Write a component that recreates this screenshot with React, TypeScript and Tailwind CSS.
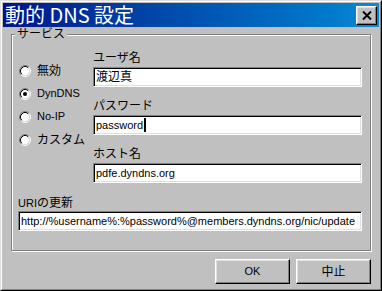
import React from "react";

const font = { fontFamily: '"Liberation Sans", "Noto Sans CJK JP", sans-serif' };

// classic win radio, drawn as 4 arcs + fill
function Radio({ checked }: { checked?: boolean }) {
    return (
        <svg width="12" height="12" viewBox="0 0 12 12" className="shrink-0">
            <circle cx="6" cy="6" r="4.2" fill="#fff" />
            <path d="M2.11 9.89 A5.5 5.5 0 0 1 9.89 2.11" stroke="#808080" fill="none" />
            <path d="M9.89 2.11 A5.5 5.5 0 0 1 2.11 9.89" stroke="#fff" fill="none" />
            <path d="M2.82 9.18 A4.5 4.5 0 0 1 9.18 2.82" stroke="#000" fill="none" />
            <path d="M9.18 2.82 A4.5 4.5 0 0 1 2.82 9.18" stroke="#dfdfdf" fill="none" />
            {checked && <circle cx="6" cy="6" r="2" fill="#000" />}
        </svg>
    );
}

const TextBox = ({ children, className = "" }: { children: React.ReactNode; className?: string }) => (
    <div className={"h-[20px] bg-white border border-t-[#808080] border-l-[#808080] border-r-white border-b-white shadow-[inset_1px_1px_0_#000,inset_-1px_-1px_0_#dfdfdf] flex items-center pl-[2px] text-black whitespace-nowrap overflow-hidden " + className}>
        {children}
    </div>
);

const Button = ({ label, className = "" }: { label: string; className?: string }) => (
    <button className={"w-[75px] h-[25px] bg-[#c0c0c0] border border-t-white border-l-white border-r-black border-b-black shadow-[inset_-1px_-1px_0_#808080,inset_1px_1px_0_#dfdfdf] text-black flex items-center justify-center " + className}>
        {label}
    </button>
);

const Field = ({ label, children }: { label: string; children: React.ReactNode }) => (
    <div className="flex flex-col">
        <div className="h-[14px] leading-[14px] text-[12px] text-black">{label}</div>
        <div className="mt-[2px]">{children}</div>
    </div>
);

export default function App() {
    const options = [
        { label: "無効", size: "text-[12px]" },
        { label: "DynDNS", checked: true, size: "text-[11px]" },
        { label: "No-IP", size: "text-[11px]" },
        { label: "カスタム", size: "text-[12px]" },
    ];

    return (
        <div style={font} className="w-[382px] h-[291px] bg-[#c0c0c0] border border-t-[#dfdfdf] border-l-[#dfdfdf] border-r-black border-b-black">
            <div className="h-full border border-t-white border-l-white border-r-[#808080] border-b-[#808080] p-px flex flex-col">
                {/* title bar */}
                <div className="h-[24px] flex items-center justify-between bg-linear-to-r from-[#00108a] to-[#1088d4] pl-[2px] pr-[2px]">
                    <span className="text-white text-[20px] leading-none" style={{ fontFamily: '"Noto Sans CJK JP", sans-serif' }}>
                        動的 DNS 設定
                    </span>
                    <button className="w-[21px] h-[19px] bg-[#c0c0c0] border border-t-white border-l-white border-r-black border-b-black shadow-[inset_-1px_-1px_0_#808080,inset_1px_1px_0_#dfdfdf] flex items-center justify-center">
                        <svg width="10" height="9" viewBox="0 0 10 9">
                            <path d="M1 0.5 L9 8.5 M9 0.5 L1 8.5" stroke="#000" strokeWidth="2" fill="none" />
                        </svg>
                    </button>
                </div>

                <div className="flex flex-col px-[8px]">
                    {/* group box */}
                    <div className="relative mt-[7px] border border-[#808080] shadow-[inset_1px_1px_0_#fff,1px_1px_0_#fff] pt-[16px] pl-[6px] pr-[8px] pb-[19px]">
                        <span className="absolute left-[3px] top-[-8px] px-[2px] bg-[#c0c0c0] text-[12px] leading-[14px] text-black">
                            サービス
                        </span>
                        <div className="flex">
                            <div className="w-[75px] flex flex-col pt-[8px]">
                                {options.map((o) => (
                                    <div key={o.label} className="h-[23px] flex items-center gap-[6px] pl-[1px] text-black">
                                        <Radio checked={o.checked} />
                                        <span className={o.size}>{o.label}</span>
                                    </div>
                                ))}
                            </div>
                            <div className="flex-1 flex flex-col gap-[12px]">
                                <Field label="ユーザ名">
                                    <TextBox className="text-[12px]">渡辺真</TextBox>
                                </Field>
                                <Field label="パスワード">
                                    <TextBox className="text-[11px]">
                                        password
                                        <span className="inline-block w-[2px] h-[14px] bg-black ml-px" />
                                    </TextBox>
                                </Field>
                                <Field label="ホスト名">
                                    <TextBox className="text-[11px]">pdfe.dyndns.org</TextBox>
                                </Field>
                            </div>
                        </div>
                        <div className="mt-[13px] h-[14px] leading-[14px] text-[12px] text-black">
                            <span className="text-[11px]">URI</span>の更新
                        </div>
                        <TextBox className="mt-px text-[11px]">http://%username%:%password%@members.dyndns.org/nic/update</TextBox>
                    </div>

                    <div className="flex justify-end gap-[6px] mt-[8px]">
                        <Button label="OK" className="text-[11px]" />
                        <Button label="中止" className="text-[12px]" />
                    </div>
                </div>
            </div>
        </div>
    );
}
